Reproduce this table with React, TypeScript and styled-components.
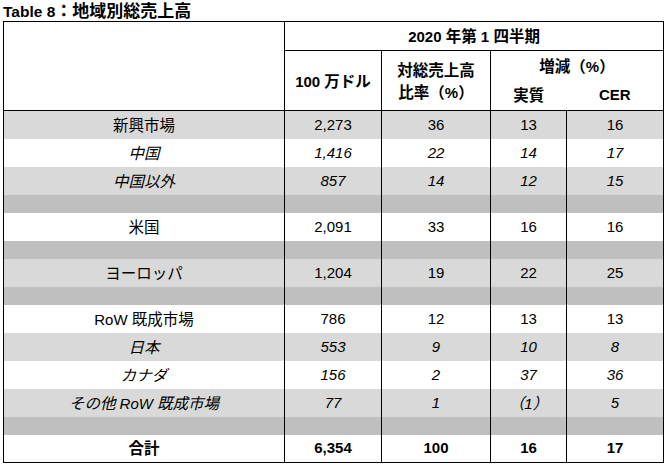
import React from 'react'
import styled, { createGlobalStyle } from 'styled-components'

const GlobalStyle = createGlobalStyle`
    body {
        margin: 0;
        background: #fff;
    }
`

const Page = styled.div`
    padding: 0 3px;
    font-family: "Liberation Sans", "Noto Sans CJK JP", sans-serif;
    color: #000;
`

const Title = styled.div`
    height: 21px;
    line-height: 20px;
    font-size: 15.5px;
    font-weight: bold;
    white-space: nowrap;
`

const Ja = styled.span`
    font-family: "Noto Sans CJK JP", sans-serif;
    font-size: 15.5px;
`

const TitleJa = styled(Ja)`
    font-size: 17px;
`

const Table = styled.table`
    width: 660px;
    table-layout: fixed;
    border-collapse: collapse;
    border: 1px solid #000;
    font-size: 15px;
`

const tones = {
    white: '#ffffff',
    light: '#d9d9d9',
    dark: '#bfbfbf',
}

type Tone = keyof typeof tones

const HeadRow = styled.tr<{ $h: number }>`
    height: ${p => p.$h}px;
`

const Head = styled.th<{ $openBottom?: boolean; $openRight?: boolean; $openLeft?: boolean }>`
    padding: 0;
    font-weight: bold;
    text-align: center;
    vertical-align: middle;
    line-height: 20px;
    border: 1px solid #000;
    ${p => p.$openBottom && 'border-bottom-style: hidden;'}
    ${p => p.$openRight && 'border-right-style: hidden;'}
    ${p => p.$openLeft && 'border-left-style: hidden;'}
`

const Row = styled.tr<{ $tone: Tone; $spacer?: boolean }>`
    height: ${p => (p.$spacer ? 18 : 28)}px;
    background: ${p => tones[p.$tone]};
`

const Cell = styled.td<{ $italic?: boolean; $bold?: boolean }>`
    padding: 0;
    text-align: center;
    vertical-align: middle;
    line-height: 18px;
    border-left: 1px solid #000;
    border-right: 1px solid #000;
    font-style: ${p => (p.$italic ? 'italic' : 'normal')};
    font-weight: ${p => (p.$bold ? 'bold' : 'normal')};
    white-space: nowrap;
`

const CJK = /([\u3000-\u30ff\u3400-\u9fff\uff00-\uffef]+)/

function mix(text: string) {
    return text.split(CJK).map((part, i) => (i % 2 ? <Ja key={i}>{part}</Ja> : part))
}

type Line = {
    tone: Tone
    label?: string
    vals?: string[]
    italic?: boolean
    bold?: boolean
}

const spacer: Line = { tone: 'dark' }

const lines: Line[] = [
    { tone: 'light', label: '新興市場', vals: ['2,273', '36', '13', '16'] },
    { tone: 'white', label: '中国', vals: ['1,416', '22', '14', '17'], italic: true },
    { tone: 'light', label: '中国以外', vals: ['857', '14', '12', '15'], italic: true },
    spacer,
    { tone: 'white', label: '米国', vals: ['2,091', '33', '16', '16'] },
    spacer,
    { tone: 'light', label: 'ヨーロッパ', vals: ['1,204', '19', '22', '25'] },
    spacer,
    { tone: 'white', label: 'RoW 既成市場', vals: ['786', '12', '13', '13'] },
    { tone: 'light', label: '日本', vals: ['553', '9', '10', '8'], italic: true },
    { tone: 'white', label: 'カナダ', vals: ['156', '2', '37', '36'], italic: true },
    { tone: 'light', label: 'その他 RoW 既成市場', vals: ['77', '1', '（1）', '5'], italic: true },
    spacer,
    { tone: 'white', label: '合計', vals: ['6,354', '100', '16', '17'], bold: true },
]

export default function App() {
    return (
        <>
            <GlobalStyle />
            <Page>
                <Title>
                    Table 8<TitleJa>：地域別総売上高</TitleJa>
                </Title>
                <Table>
                    <colgroup>
                        <col style={{ width: 281 }} />
                        <col style={{ width: 97 }} />
                        <col style={{ width: 109 }} />
                        <col style={{ width: 76 }} />
                        <col style={{ width: 97 }} />
                    </colgroup>
                    <thead>
                        <HeadRow $h={29}>
                            <Head rowSpan={3} />
                            <Head colSpan={4}>{mix('2020 年第 1 四半期')}</Head>
                        </HeadRow>
                        <HeadRow $h={30}>
                            <Head rowSpan={2}>{mix('100 万ドル')}</Head>
                            <Head rowSpan={2}>
                                {mix('対総売上高')}
                                <br />
                                {mix('比率（%）')}
                            </Head>
                            <Head colSpan={2} $openBottom>{mix('増減（%）')}</Head>
                        </HeadRow>
                        <HeadRow $h={30}>
                            <Head $openRight>{mix('実質')}</Head>
                            <Head $openLeft>CER</Head>
                        </HeadRow>
                    </thead>
                    <tbody>
                        {lines.map((line, i) => (
                            <Row key={i} $tone={line.tone} $spacer={!line.label}>
                                <Cell $italic={line.italic} $bold={line.bold}>
                                    {line.label && mix(line.label)}
                                </Cell>
                                {[0, 1, 2, 3].map(j => (
                                    <Cell key={j} $italic={line.italic} $bold={line.bold}>
                                        {line.vals && mix(line.vals[j])}
                                    </Cell>
                                ))}
                            </Row>
                        ))}
                    </tbody>
                </Table>
            </Page>
        </>
    )
}
